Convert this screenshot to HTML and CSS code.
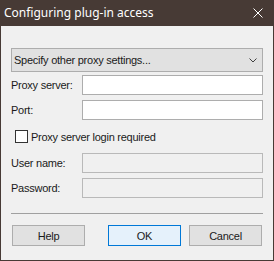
FILE: index.html
```html
<!DOCTYPE html>
<html lang="en">
<head>
    <meta charset="UTF-8">
    <title>Configuring plug-in access</title>
    <link rel="stylesheet" href="styles.css">
</head>
<body>
    <div class="window">
        <div class="titlebar">
            <span class="title">Configuring plug-in access</span>
            <svg class="close" width="10" height="10" viewBox="0 0 10 10">
                <path d="M0.5 0.5 L9.5 9.5 M9.5 0.5 L0.5 9.5" stroke="#ffffff" stroke-width="1" fill="none"/>
            </svg>
        </div>

        <div class="content">
            <div class="select">
                <span>Specify other proxy settings...</span>
                <svg class="chevron" width="8" height="5" viewBox="0 0 8 5">
                    <path d="M0.5 0.5 L4 4 L7.5 0.5" stroke="#404040" stroke-width="1" fill="none"/>
                </svg>
            </div>

            <div class="row first">
                <label>Proxy server:</label>
                <div class="field"></div>
            </div>
            <div class="row">
                <label>Port:</label>
                <div class="field"></div>
            </div>

            <div class="check">
                <div class="box"></div>
                <span>Proxy server login required</span>
            </div>

            <div class="row login">
                <label>User name:</label>
                <div class="field disabled"></div>
            </div>
            <div class="row">
                <label>Password:</label>
                <div class="field disabled"></div>
            </div>

            <div class="separator"></div>

            <div class="buttons">
                <button class="help">Help</button>
                <button class="ok">OK</button>
                <button class="cancel">Cancel</button>
            </div>
        </div>
    </div>
</body>
</html>
```

FILE: styles.css
```css
body {
    margin: 0;
    font-family: "Liberation Sans", Arial, sans-serif;
    font-size: 11px;
    letter-spacing: -0.25px;
    color: #1a1a1a;
}
.window {
    width: 274px;
    height: 261px;
    display: flex;
    flex-direction: column;
    background-color: #f0f0f0;
}
.titlebar {
    height: 26px;
    flex-shrink: 0;
    background-color: #473a35;
    display: flex;
    align-items: center;
    justify-content: space-between;
    padding: 0 11px 0 4px;
}
.title {
    font-family: "Noto Sans", sans-serif;
    font-size: 12px;
    letter-spacing: 0;
    color: #ffffff;
    margin-top: -1px;
}
.close {
    display: block;
}
.content {
    flex: 1;
    border: 1px solid #473a35;
    border-top: none;
    padding: 22px 10px 0;
}
.select {
    height: 24px;
    box-sizing: border-box;
    border: 1px solid #adadad;
    background-color: #e1e1e1;
    display: flex;
    align-items: center;
    justify-content: space-between;
    padding: 0 5px 0 2px;
}
.row {
    display: flex;
    align-items: center;
    margin-top: 5px;
}
.row.first {
    margin-top: 3px;
}
.row.login {
    margin-top: 10px;
}
.row label {
    width: 71px;
}
.field {
    width: 181px;
    height: 20px;
    box-sizing: border-box;
    border: 1px solid #adadad;
    background-color: #ffffff;
}
.field.disabled {
    background-color: #f0f0f0;
    border-color: #b9b9b9;
}
.check {
    display: flex;
    align-items: center;
    height: 13px;
    margin: 10px 0 0 4px;
}
.box {
    width: 13px;
    height: 13px;
    box-sizing: border-box;
    border: 1px solid #333333;
    background-color: #ffffff;
    margin-right: 3px;
}
.separator {
    height: 1px;
    background-color: #a0a0a0;
    margin-top: 15px;
}
.buttons {
    display: flex;
    margin-top: 11px;
}
.buttons button {
    width: 73px;
    height: 21px;
    box-sizing: border-box;
    border: 1px solid #adadad;
    background-color: #e1e1e1;
    font-family: "Liberation Sans", Arial, sans-serif;
    font-size: 11px;
    letter-spacing: -0.25px;
    color: #1a1a1a;
    padding: 0;
}
.buttons .help {
    margin-left: 1px;
}
.buttons .ok {
    margin-left: 23px;
    border-color: #0078d7;
    background-color: #e5f1fb;
}
.buttons .cancel {
    margin-left: 8px;
}
```
